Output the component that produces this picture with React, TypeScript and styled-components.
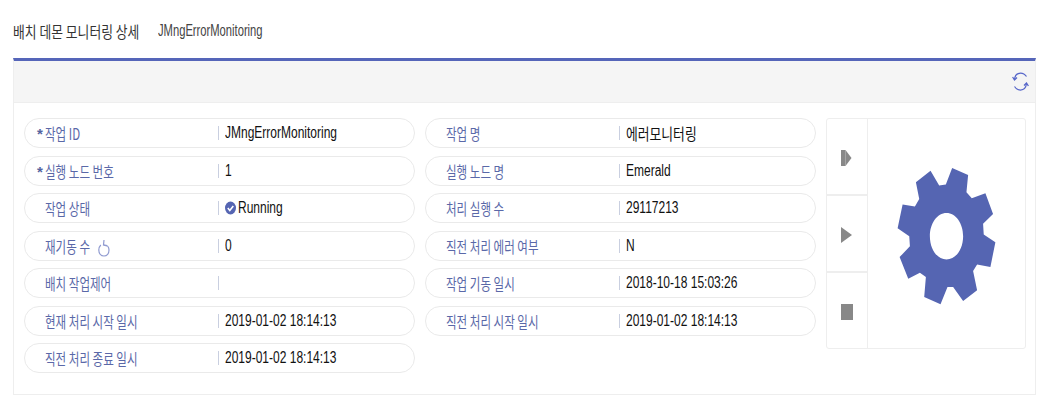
import React from "react";
import styled, { createGlobalStyle } from "styled-components";

const Global = createGlobalStyle`
  html, body { margin: 0; padding: 0; background: #fff; }
  body { width: 1046px; height: 408px; overflow: hidden; font-family: "Noto Sans CJK KR", "Liberation Sans", sans-serif; }
`;
const Page = styled.div`
  padding: 0 10px 0 13px;
  display: flex;
  flex-direction: column;
`;
const Header = styled.header`
  height: 58px;
  display: flex;
  align-items: center;
  gap: 20px;
  box-sizing: border-box;
  padding-top: 3px;
`;
const Squeezed = styled.span<{ $w: number }>`
  display: inline-block;
  white-space: nowrap;
  transform: scaleX(${(p) => p.$w});
  transform-origin: left center;
`;
const Title = styled.h1`
  margin: 0;
  width: 125px;
  font-size: 16px;
  line-height: 20px;
  font-weight: 400;
  color: #333;
`;
const Sub = styled.div`
  font-size: 16px;
  line-height: 20px;
  padding-top: 1px;
  color: #444;
  font-family: "Liberation Sans", sans-serif;
`;
const Panel = styled.section`
  border-top: 3px solid #5565b9;
  border-left: 1px solid #eee;
  border-right: 1px solid #eee;
  border-bottom: 1px solid #eee;
  height: 337px;
  box-sizing: border-box;
`;
const Toolbar = styled.div`
  height: 42px;
  background: #f5f5f5;
  border-bottom: 1px solid #eee;
  box-sizing: border-box;
  display: flex;
  align-items: center;
  justify-content: flex-end;
  padding-right: 6px;
`;
const Body = styled.div`
  display: flex;
  padding: 15px 9px 0 10px;
  gap: 10px;
`;
const Column = styled.div`
  width: 391px;
  flex: none;
  display: flex;
  flex-direction: column;
  gap: 7.5px;
`;
const Row = styled.div`
  height: 30px;
  box-sizing: border-box;
  border: 1.5px solid #eaeaea;
  border-radius: 15px;
  display: flex;
  align-items: center;
  background: #fff;
`;
const Label = styled.div`
  width: 193px;
  flex: none;
  box-sizing: border-box;
  padding-left: 20px;
  font-size: 16px;
  line-height: 20px;
  color: #5a68a8;
  display: flex;
  align-items: center;
  position: relative;
`;
const Star = styled.span`
  position: absolute;
  left: 12px;
  top: 1px;
  font-size: 15px;
  font-weight: 700;
  font-family: "Liberation Sans", sans-serif;
  color: #5565a0;
`;
const Value = styled.div`
  flex: 1;
  height: 14px;
  border-left: 1px solid #c9cfe0;
  padding-left: 6px;
  display: flex;
  align-items: center;
  gap: 2px;
  font-family: "Liberation Sans", "Noto Sans CJK KR", sans-serif;
  font-size: 16px;
  color: #111;
`;
const Control = styled.div`
  width: 200px;
  flex: none;
  height: 231px;
  box-sizing: border-box;
  border: 1px solid #eee;
  border-radius: 3px;
  display: flex;
`;
const Buttons = styled.div`
  width: 40px;
  flex: none;
  border-right: 1px solid #eee;
  display: flex;
  flex-direction: column;
`;
const Btn = styled.div`
  flex: 1;
  display: flex;
  align-items: center;
  padding-left: 14px;
  padding-top: 3px;
  & + & { border-top: 2px solid #eee; }
`;
const GearArea = styled.div`
  flex: 1;
  display: flex;
  align-items: center;
  justify-content: center;
  padding-top: 3px;
`;
const RestartWrap = styled.span`
  position: absolute;
  left: 73px;
  top: 3px;
  display: flex;
`;

const Refresh = () => (
  <svg width="17" height="21" viewBox="0 0 17 21" fill="none" stroke="#5565c9" strokeWidth="1.25">
    <path d="M2.5 8.5 C3 4.5 5.5 2 8.5 2 C11 2 13 3.2 14.5 5.5" />
    <path d="M14.5 12.5 C14 16.5 11.5 19 8.5 19 C6 19 4 17.8 2.5 15.5" />
    <path d="M0.6 6 L2.5 9 L5 6.5" />
    <path d="M16.4 15 L14.5 12 L12 14.5" />
  </svg>
);
const Check = () => (
  <svg width="11" height="14" viewBox="0 0 11 14">
    <ellipse cx="5.5" cy="7" rx="5.5" ry="6.5" fill="#5565b2" />
    <path d="M2.8 7 L4.8 9.4 L8.3 5" fill="none" stroke="#fff" strokeWidth="1.6" />
  </svg>
);
const Restart = () => (
  <svg width="12" height="18" viewBox="0 0 12 18" fill="none" stroke="#8f9ad0" strokeWidth="1.2">
    <path d="M2.8 6 C1.4 7.4 .8 9.2 .8 11 C.8 14.4 3 17 6 17 C9 17 11 14.4 11 11 C11 8 9 6 6 6" />
    <path d="M6 1 L5.5 6 L9 7" />
  </svg>
);
const Gear = () => (
  <svg width="107" height="143" viewBox="220 310 320 430">
    <path
      fill="#5565b2"
      fillRule="evenodd"
      d="M397 322 L445 343 L440 395 L456 413 L497 398 L520 460 L490 490 L492 522 L527 545 L512 620 L472 612 L460 632 L472 690 L430 722 L400 680 L383 680 L362 732 L313 710 L318 650 L300 637 L265 655 L239 590 L270 557 L268 527 L233 503 L248 432 L285 438 L298 415 L288 365 L332 330 L358 375 L378 372 Z M380 457 C352 457 330 488 330 527 C330 566 352 597 380 597 C408 597 430 566 430 527 C430 488 408 457 380 457 Z"
    />
  </svg>
);
const StepIcon = () => (
  <svg width="11" height="16" viewBox="0 0 11 16" fill="#888">
    <rect x="0" y="0" width="4.5" height="16" />
    <path d="M4.5 0 L10.5 8 L4.5 16 Z" />
  </svg>
);
const PlayIcon = () => (
  <svg width="11" height="16" viewBox="0 0 11 16" fill="#888">
    <path d="M0 0 L11 8 L0 16 Z" />
  </svg>
);
const StopIcon = () => (
  <svg width="12" height="16" viewBox="0 0 12 16" fill="#888">
    <rect width="12" height="16" />
  </svg>
);

type Item = { label: string; value?: string; req?: boolean; extra?: React.ReactNode; w?: number };

const left: Item[] = [
  { label: "작업 ID", value: "JMngErrorMonitoring", req: true },
  { label: "실행 노드 번호", value: "1", req: true },
  { label: "작업 상태", value: "Running", extra: <Check /> },
  { label: "재기동 수", value: "0" },
  { label: "배치 작업제어" },
  { label: "현재 처리 시작 일시", value: "2019-01-02 18:14:13" },
  { label: "직전 처리 종료 일시", value: "2019-01-02 18:14:13" },
];
const right: Item[] = [
  { label: "작업 명", value: "에러모니터링", w: 0.8 },
  { label: "실행 노드 명", value: "Emerald" },
  { label: "처리 실행 수", value: "29117213" },
  { label: "직전 처리 에러 여부", value: "N" },
  { label: "작업 기동 일시", value: "2018-10-18 15:03:26" },
  { label: "직전 처리 시작 일시", value: "2019-01-02 18:14:13" },
];

const Field = ({ item }: { item: Item }) => (
  <Row>
    <Label>
      {item.req && <Star>*</Star>}
      <Squeezed $w={0.72}>{item.label}</Squeezed>
      {item.label === "재기동 수" && <RestartWrap><Restart /></RestartWrap>}
    </Label>
    <Value>
      {item.extra}
      {item.value && <Squeezed $w={item.w ?? 0.75}>{item.value}</Squeezed>}
    </Value>
  </Row>
);

export default function App() {
  return (
    <Page>
      <Global />
      <Header>
        <Title><Squeezed $w={0.8}>배치 데몬 모니터링 상세</Squeezed></Title>
        <Sub><Squeezed $w={0.7}>JMngErrorMonitoring</Squeezed></Sub>
      </Header>
      <Panel>
        <Toolbar><Refresh /></Toolbar>
        <Body>
          <Column>{left.map((i) => <Field key={i.label} item={i} />)}</Column>
          <Column>{right.map((i) => <Field key={i.label} item={i} />)}</Column>
          <Control>
            <Buttons>
              <Btn><StepIcon /></Btn>
              <Btn><PlayIcon /></Btn>
              <Btn><StopIcon /></Btn>
            </Buttons>
            <GearArea><Gear /></GearArea>
          </Control>
        </Body>
      </Panel>
    </Page>
  );
}
